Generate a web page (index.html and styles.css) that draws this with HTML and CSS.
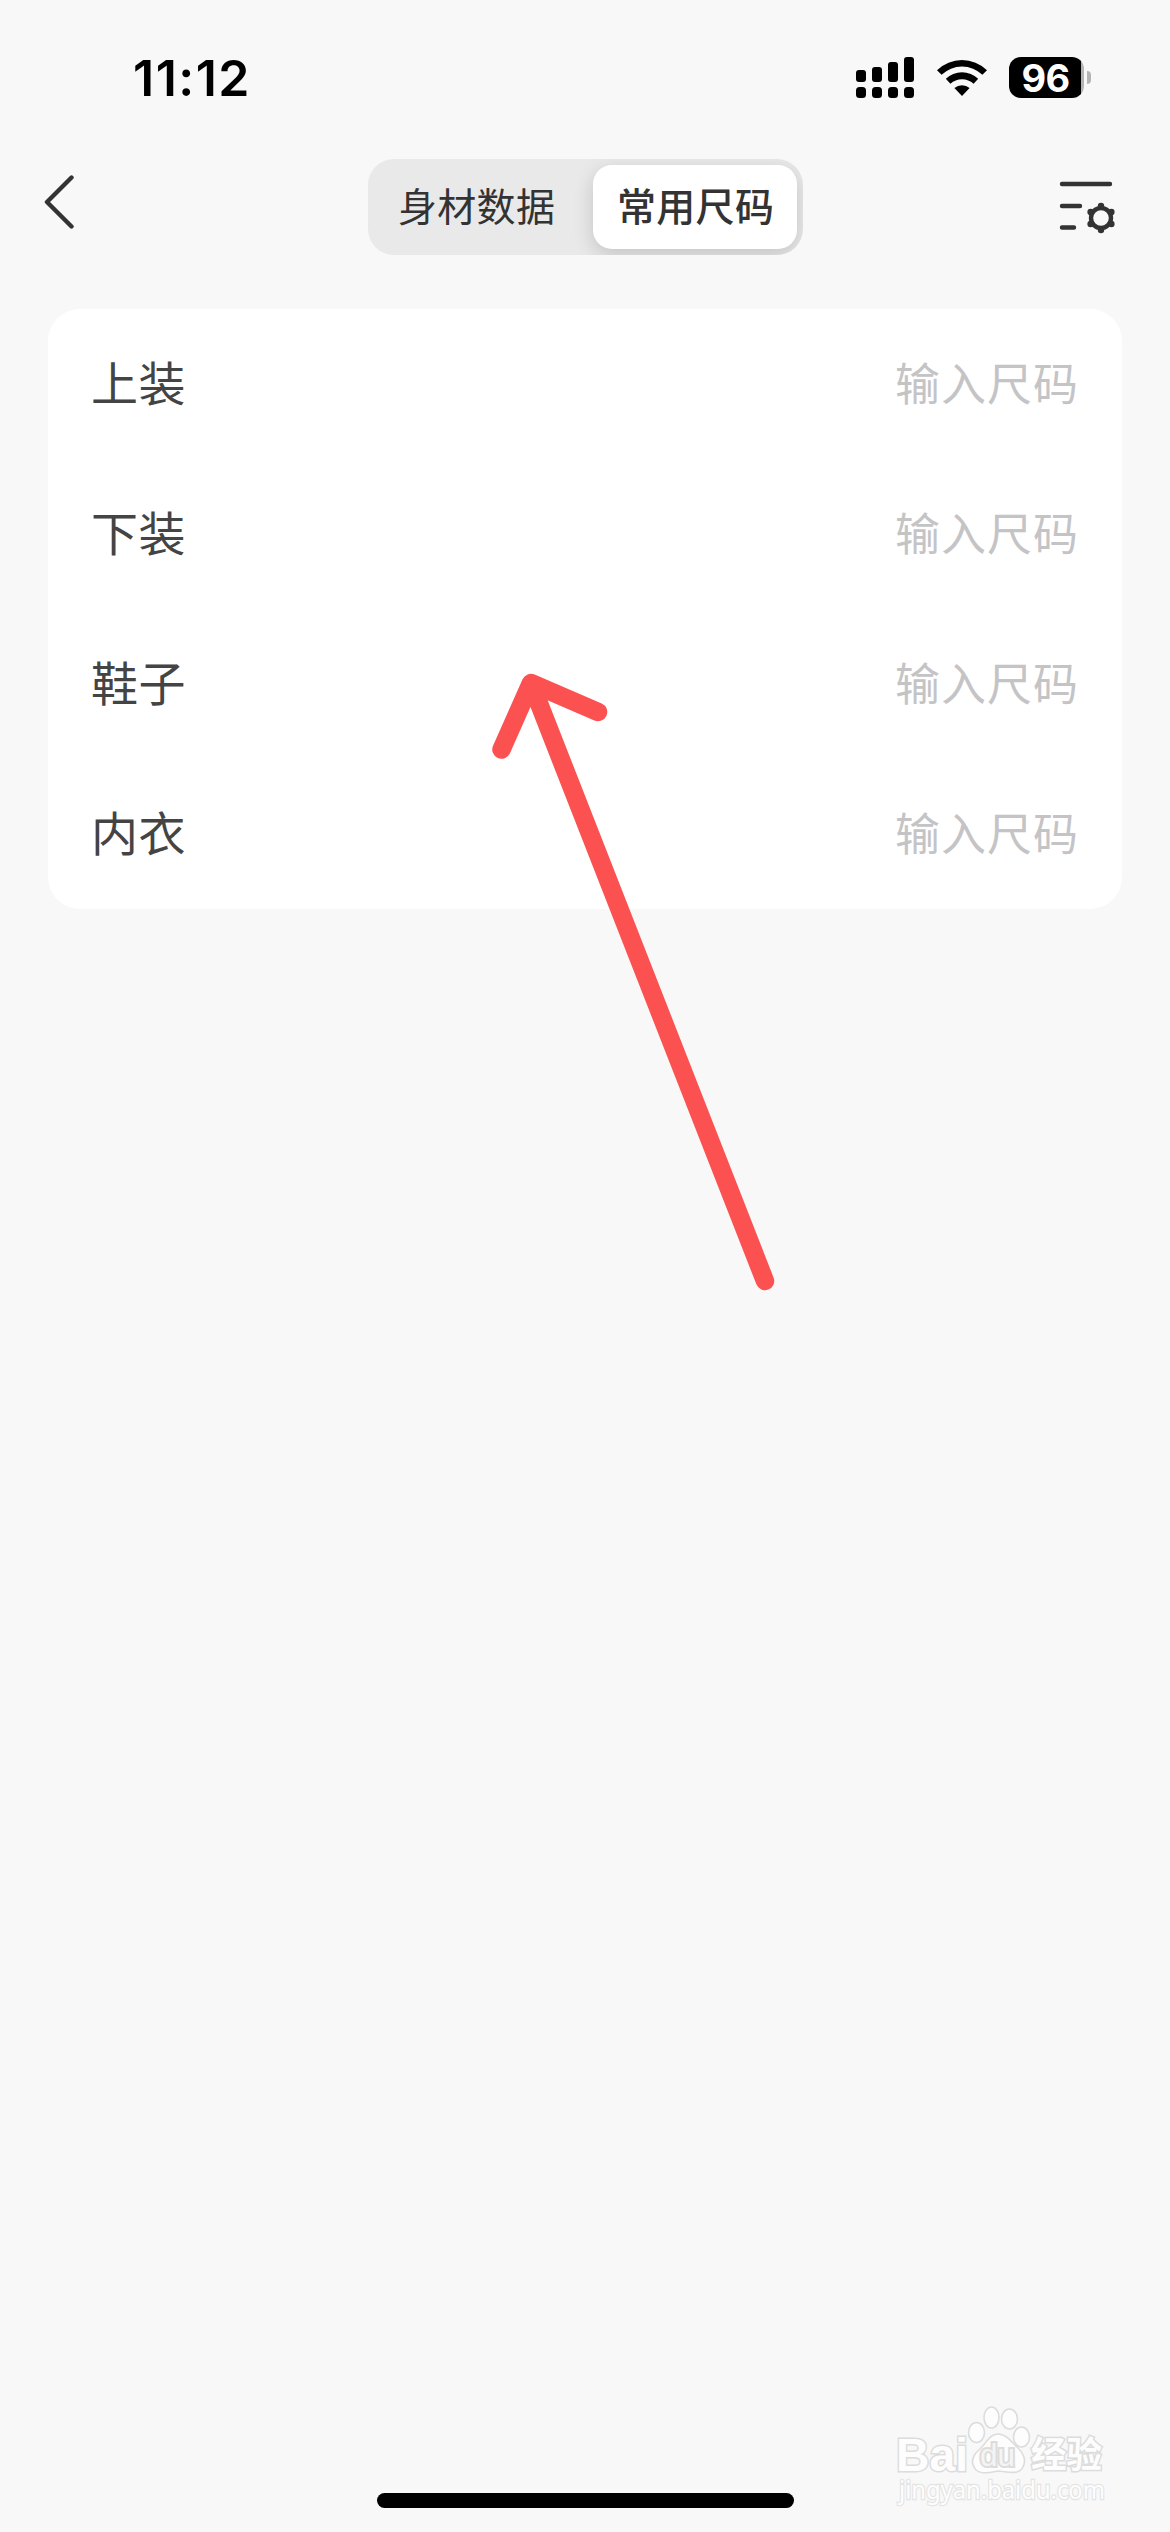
FILE: index.html
```html
<!DOCTYPE html>
<html lang="zh-CN">
<head>
<meta charset="utf-8">
<title>常用尺码</title>
<link rel="stylesheet" href="styles.css">
</head>
<body>
<div class="screen">
  <header class="status">
    <time class="clock">11:12</time>
    <div class="indicators">
      <svg class="signal" width="58" height="41" viewBox="0 0 58 41">
        <rect x="0" y="13" width="10" height="12" rx="3"/>
        <rect x="16" y="10" width="10" height="15" rx="3"/>
        <rect x="32" y="5" width="10" height="20" rx="3"/>
        <rect x="48" y="0" width="10" height="25" rx="3"/>
        <rect x="0" y="30" width="10" height="11" rx="3.5"/>
        <rect x="16" y="30" width="10" height="11" rx="3.5"/>
        <rect x="32" y="30" width="10" height="11" rx="3.5"/>
        <rect x="48" y="30" width="10" height="11" rx="3.5"/>
      </svg>
      <svg class="wifi" width="52" height="41" viewBox="0 0 52 41">
        <path d="M1 13.2A36 36 0 0 1 51 13.2L46.4 17.8A29.2 29.2 0 0 0 5.6 17.8Z"/>
        <path d="M9.8 21.8A23.2 23.2 0 0 1 42.2 21.8L37.6 26.8A17 17 0 0 0 14.4 26.8Z"/>
        <path d="M18.4 31A11.5 11.5 0 0 1 33.6 31L26 39Z"/>
      </svg>
      <div class="battery"><span class="level">96</span><i class="cap"></i></div>
    </div>
  </header>

  <nav class="navbar">
    <svg class="back" width="30" height="58" viewBox="0 0 30 58">
      <path d="M27.5 4.5L3 29L27.5 53.5"/>
    </svg>
    <div class="tabs">
      <span class="tab">身材数据</span>
      <span class="tab active">常用尺码</span>
    </div>
    <svg class="manage" width="58" height="54" viewBox="0 0 58 54">
      <path d="M3 4H51M3 26H21M3 47.5H15"/>
      <circle cx="42" cy="38" r="10"/>
      <g class="teeth">
        <circle cx="42" cy="26" r="3.2"/><circle cx="52.4" cy="32" r="3.2"/>
        <circle cx="52.4" cy="44" r="3.2"/><circle cx="42" cy="50" r="3.2"/>
        <circle cx="31.6" cy="44" r="3.2"/><circle cx="31.6" cy="32" r="3.2"/>
      </g>
    </svg>
  </nav>

  <main class="card">
    <div class="row"><span class="label">上装</span><span class="hint">输入尺码</span></div>
    <div class="row"><span class="label">下装</span><span class="hint">输入尺码</span></div>
    <div class="row"><span class="label">鞋子</span><span class="hint">输入尺码</span></div>
    <div class="row"><span class="label">内衣</span><span class="hint">输入尺码</span></div>
  </main>

  <div class="home-indicator"></div>

  <svg class="arrow" width="300" height="640" viewBox="480 660 300 640">
    <path d="M531 683L765 1281M501.5 749.5L531 683L598 712"/>
  </svg>

  <svg class="watermark" width="230" height="110" viewBox="890 2400 230 110">
    <g class="mark">
      <ellipse cx="976.5" cy="2432.5" rx="8" ry="10"/>
      <ellipse cx="991.5" cy="2417.5" rx="7.5" ry="10.5"/>
      <ellipse cx="1009.5" cy="2419" rx="8" ry="10"/>
      <ellipse cx="1021.5" cy="2437" rx="8" ry="10"/>
      <path d="M998 2434C1007 2434 1012 2443 1018 2448C1025 2455 1026 2461 1023 2467C1019 2475 1010 2472 998 2471C987 2473 978 2475 974 2467C970 2460 974 2454 980 2449C986 2444 989 2434 998 2434Z"/>
      <text class="latin" x="896" y="2471" textLength="72" lengthAdjust="spacingAndGlyphs">Bai</text>
      <text class="du" x="980" y="2466" textLength="35" lengthAdjust="spacingAndGlyphs">du</text>
      <text class="cn" x="1031" y="2468" textLength="71" lengthAdjust="spacingAndGlyphs">经验</text>
      <text class="url" x="899" y="2499" textLength="206" lengthAdjust="spacingAndGlyphs">jingyan.baidu.com</text>
    </g>
  </svg>
</div>
</body>
</html>
```
FILE: styles.css
```css
* { box-sizing: border-box; }

body {
  margin: 0;
  background: #f8f8f8;
  font-family: "Noto Sans CJK SC", sans-serif;
}

.screen {
  position: relative;
  display: flex;
  flex-direction: column;
  width: 1170px;
  height: 2532px;
  overflow: hidden;
}

.status {
  display: flex;
  justify-content: space-between;
  align-items: center;
  height: 155px;
  padding: 0 79px 0 133px;
}

.clock {
  font: 600 50px/60px Inter, sans-serif;
  letter-spacing: 1.5px;
}

.indicators {
  display: flex;
  align-items: center;
}

.wifi { margin: 0 21px 0 22px; }

.battery {
  display: flex;
  align-items: center;
  gap: 3px;
}

.level {
  width: 75px;
  height: 41px;
  padding-right: 2px;
  border-radius: 12px;
  background: linear-gradient(90deg, #000 72px, #b4b4b4 72px);
  color: #fff;
  font: 700 38px/42px Inter, sans-serif;
  letter-spacing: -0.8px;
  text-align: center;
}

.cap {
  width: 4px;
  height: 13px;
  border-radius: 0 5px 5px 0;
  background: #b4b4b4;
}

.navbar {
  display: flex;
  justify-content: space-between;
  height: 154px;
  padding: 4px 53px 0 44px;
}

.back, .manage {
  fill: none;
  stroke: #333;
  stroke-width: 4.4;
  stroke-linecap: round;
  stroke-linejoin: round;
}

.back { margin-top: 14px; }
.manage { margin-top: 21px; }
.manage .teeth { fill: #333; stroke: none; }

.tabs {
  display: flex;
  width: 435px;
  height: 96px;
  margin-left: 38px;
  padding: 6px;
  border-radius: 26px;
  background: #e9e9e9;
  overflow: hidden;
}

.tab {
  flex: 1 0 0;
  padding-left: 24px;
  border-radius: 19px;
  color: #333;
  font-size: 39px;
  line-height: 79px;
  letter-spacing: 0.3px;
  white-space: nowrap;
}

.tab.active {
  flex: 0 0 204px;
  background: #fff;
  box-shadow: 0 6px 20px rgba(0, 0, 0, .16);
  font-weight: 500;
}

.card {
  width: 1074px;
  margin: 0 48px;
  border-radius: 32px;
  background: #fff;
}

.row {
  display: flex;
  justify-content: space-between;
  align-items: center;
  height: 150px;
  padding: 0 43px 5px;
}

.label {
  padding-bottom: 2px;
  color: #444;
  font-size: 47px;
  line-height: 70px;
  letter-spacing: 0.6px;
}

.hint {
  color: #c4c4c6;
  font-size: 45px;
  line-height: 70px;
  letter-spacing: 1px;
}

.home-indicator {
  width: 417px;
  height: 15px;
  margin: auto auto 24px 377px;
  border-radius: 8px;
  background: #000;
}

.arrow {
  position: absolute;
  left: 480px;
  top: 660px;
  fill: none;
  stroke: #fb5251;
  stroke-width: 18.5;
  stroke-linecap: round;
  stroke-linejoin: round;
}

.watermark {
  position: absolute;
  left: 890px;
  top: 2400px;
}

.mark {
  fill: #fdfdfd;
  stroke: #dcdcdc;
  stroke-width: 1.6;
}

.mark text { paint-order: stroke; stroke-width: 3; }
.latin { font: 700 47px "Liberation Sans", sans-serif; }
.mark .du { font: 400 31px "Liberation Sans", sans-serif; fill: #f4f4f4; stroke-width: 4; }
.cn { font: 700 36px "Noto Sans CJK SC", sans-serif; }
.mark .url { font: 400 25px "Noto Sans", sans-serif; stroke: #e4e4e4; stroke-width: 2.4; }
```
